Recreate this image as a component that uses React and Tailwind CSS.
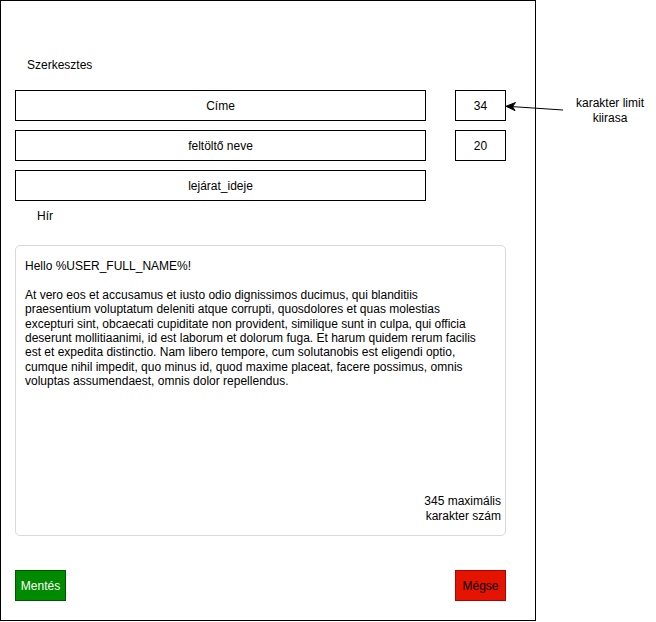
import React from 'react';

const text = "At vero eos et accusamus et iusto odio dignissimos ducimus, qui blanditiis praesentium voluptatum deleniti atque corrupti, quosdolores et quas molestias excepturi sint, obcaecati cupiditate non provident, similique sunt in culpa, qui officia deserunt mollitiaanimi, id est laborum et dolorum fuga. Et harum quidem rerum facilis est et expedita distinctio. Nam libero tempore, cum solutanobis est eligendi optio, cumque nihil impedit, quo minus id, quod maxime placeat, facere possimus, omnis voluptas assumendaest, omnis dolor repellendus.";

const Field = ({ label, count }) => (
  <div className="flex">
    <div className="w-[411px] h-[31px] border border-black flex items-center justify-center">
      {label}
    </div>
    {count && (
      <div className="ml-[29px] w-[51px] h-[31px] border border-black flex items-center justify-center">
        {count}
      </div>
    )}
  </div>
);

const App = () => {
  return (
    <div
      className="relative w-[656px] h-[622px] bg-white flex text-black text-[12px] leading-[14px]"
      style={{ fontFamily: '"Liberation Sans", Arial, sans-serif' }}
    >
      {/* Frame */}
      <div className="w-[536px] h-[621px] border border-black px-[14px] pt-[57px] flex flex-col">
        <div className="ml-[12px]">Szerkesztes</div>

        <div className="mt-[18px] flex flex-col gap-[9px]">
          <Field label="Címe" count="34" />
          <Field label="feltöltő neve" count="20" />
          <Field label="lejárat_ideje" />
        </div>

        <div className="mt-[8px] ml-[22px]">Hír</div>

        {/* Message box */}
        <div className="mt-[22px] w-[491px] h-[291px] border border-[#d9d9d9] rounded-[5px] pl-[9px] pr-[4px] pt-[13px] pb-[12px] flex flex-col justify-between leading-[14.4px]">
          <div className="w-[455px]">
            <p>Hello %USER_FULL_NAME%!</p>
            <p className="mt-[14.4px]">{text}</p>
          </div>
          <div className="self-end text-right leading-[14.4px]">
            345 maximális
            <br />
            karakter szám
          </div>
        </div>

        {/* Buttons */}
        <div className="mt-[34px] w-[491px] flex justify-between">
          <button className="w-[51px] h-[31px] bg-[#008a00] border border-[#005700] text-white">
            Mentés
          </button>
          <button className="w-[51px] h-[31px] bg-[#e51400] border border-[#b20000] text-black">
            Mégse
          </button>
        </div>
      </div>

      {/* Annotation */}
      <div className="ml-[34px] w-[80px] pt-[96px] text-center leading-[15px]">
        karakter limit
        <br />
        kiirasa
      </div>

      <svg className="absolute left-0 top-0 pointer-events-none" width="656" height="622">
        <line x1="563" y1="110" x2="512" y2="106.6" stroke="black" strokeWidth="1" />
        <path d="M506 106.3 L515.5 102.5 L512.5 106.6 L515 110.6 Z" fill="black" stroke="black" strokeWidth="1" strokeLinejoin="miter" />
      </svg>
    </div>
  );
};

export default App;
